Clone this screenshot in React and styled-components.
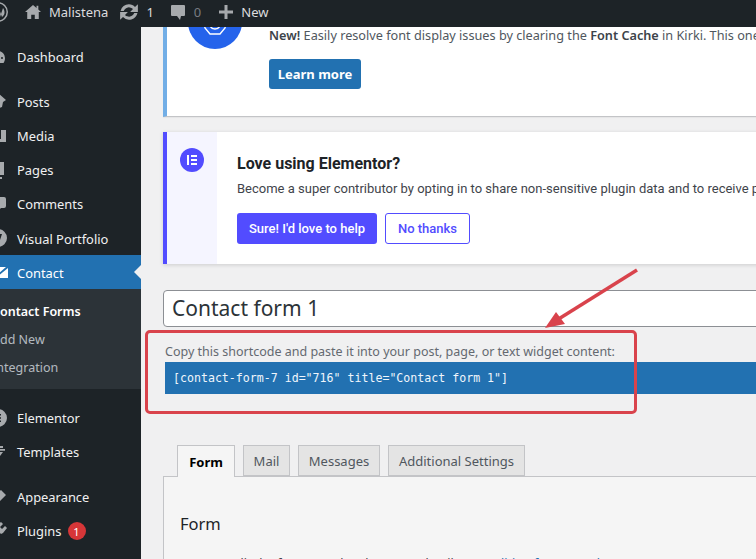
import React from "react";
import styled, { createGlobalStyle } from "styled-components";

const Global = createGlobalStyle`
  html, body { margin: 0; padding: 0; background: #f0f0f1; overflow: hidden; }
  * { box-sizing: border-box; }
`;
const UI = `"Noto Sans", "Open Sans", sans-serif`;

const Page = styled.div`
  position: relative; width: 756px; height: 559px; overflow: hidden;
  display: flex; flex-direction: column; font-family: ${UI}; background: #f0f0f1;
`;
const AdminBar = styled.header`
  height: 27px; flex: none; background: #1d2327; color: #c3c4c7; display: flex; align-items: center;
  padding-bottom: 3px; font-size: 13px; white-space: nowrap; position: relative; z-index: 2;
`;
const BarItem = styled.div`
  display: flex; align-items: center; gap: ${p => p.$gap ?? 6}px; margin-left: ${p => p.$ml ?? 0}px;
  color: ${p => p.$color ?? "#dcdcde"};
`;
const BarIcon = styled.svg`
  width: ${p => p.$w ?? 20}px; height: 20px; flex: none; fill: #a7aaad; margin-left: ${p => p.$ml ?? 0}px;
`;
const Body = styled.div`display: flex; flex: 1; min-height: 0;`;
const Sidebar = styled.nav`
  width: 141px; flex: none; background: #1d2327; padding-top: 13px; overflow: hidden;
`;
const MenuRow = styled.div`
  height: 34px; display: flex; align-items: center; gap: 9px; position: relative;
  font-size: 12.9px; white-space: nowrap;
  margin-top: ${p => p.$mt ?? 0}px;
  color: ${p => p.$active ? "#fff" : "#f0f0f1"};
  background: ${p => p.$active ? "#2271b1" : "transparent"};
  &::after {
    content: ${p => p.$active ? '""' : "none"}; position: absolute; right: 0; top: 10px;
    border: 7px solid transparent; border-right-color: #f0f0f1; border-left-width: 0;
  }
`;
const MenuLabel = styled.span`
  position: relative; top: ${p => p.$nudge ?? 0}px;
`;
const MenuIcon = styled.svg`
  width: 20px; height: 20px; flex: none; margin-left: -12px; fill: ${p => p.$active ? "#fff" : "#a7aaad"};
`;
const Badge = styled.span`
  width: 18px; height: 18px; border-radius: 50%; background: #d63638; color: #fff; font-size: 11px;
  display: flex; align-items: center; justify-content: center; margin-left: -3px;
`;
const Submenu = styled.div`
  background: #2c3338; height: 100px; padding-top: 8px; margin-bottom: 12px;
`;
const SubRow = styled.div`
  height: 28px; display: flex; align-items: center; margin-left: -8px; font-size: 12.5px; white-space: nowrap;
  color: ${p => p.$on ? "#fff" : "rgba(240,246,252,.7)"};
  font-weight: ${p => p.$on ? 600 : 400};
`;
const Main = styled.main`
  flex: 1; min-width: 0; overflow: hidden; padding-left: 22px; position: relative;
`;
const Inner = styled.div`width: 900px;`;
const KirkiNotice = styled.section`
  height: 90px; background: #fff; border-left: 4px solid #72aee6; border-bottom: 1px solid #c3c4c7;
  display: flex; box-shadow: 0 1px 1px rgba(0,0,0,.04);
`;
const KirkiCircle = styled.div`
  width: 54px; height: 54px; border-radius: 50%; background: #2563eb; flex: none; margin: -32px 27px 0 21px;
  display: flex; align-items: flex-end; justify-content: center; padding-bottom: 13px;
`;
const KirkiBody = styled.div`padding-top: 1px; display: flex; flex-direction: column; align-items: flex-start;`;
const KirkiText = styled.p`
  margin: 0; font-size: 12.7px; line-height: 15px; color: #50575e; white-space: nowrap;
  b { font-weight: 600; color: #3c434a; }
`;
const LearnBtn = styled.button`
  margin-top: 16px; width: 92px; height: 30px; background: #2271b1; color: #fff; border: 0; border-radius: 3px;
  font: 700 13px ${UI}; padding: 0;
`;
const ElementorNotice = styled.section`
  margin-top: 15px; height: 132px; background: #fff; display: flex; border-left: 4px solid #524cff;
  box-shadow: 0 1px 4px rgba(0,0,0,.15); font-family: Roboto, sans-serif;
`;
const ElementorSide = styled.div`
  width: 50px; flex: none; background: #f5f5ff; padding: 16px 0 0 13px;
`;
const ElementorLogo = styled.div`
  width: 24px; height: 24px; border-radius: 50%; background: #524cff;
  display: flex; align-items: center; justify-content: center;
`;
const ElementorBody = styled.div`padding: 22px 0 0 20px;`;
const ElementorTitle = styled.h3`
  margin: 0; font: 700 16px/20px Roboto, sans-serif; color: #1d2327;
`;
const ElementorText = styled.p`
  margin: 5px 0 0; font: 400 13px/20px Roboto, sans-serif; color: #3f444b; white-space: nowrap;
`;
const ElementorActions = styled.div`display: flex; gap: 8px; margin-top: 14px; align-items: flex-start;`;
const SolidBtn = styled.button`
  width: 140px; height: 31px; border: 0; border-radius: 3px; background: #524cff; color: #fff;
  font: 500 13px Roboto, sans-serif; padding: 0;
`;
const GhostBtn = styled.button`
  width: 85px; height: 31px; border: 1px solid #524cff; border-radius: 3px; background: #fff; color: #524cff;
  font: 500 13px Roboto, sans-serif; padding: 0;
`;
const TitleInput = styled.div`
  margin-top: 26px; height: 37px; background: #fff; border: 1px solid #8c8f94; border-radius: 4px;
  font-size: 21px; line-height: 35px; color: #2c3338; padding-left: 8px;
`;
const Hint = styled.p`
  margin: 17px 0 0 2px; font-size: 12.5px; line-height: 16px; color: #646970; white-space: nowrap;
`;
const Shortcode = styled.div`
  margin: 2px 0 0 2px; height: 32px; background: #2271b1; color: #f0f6fc; padding-left: 8px;
  font: 400 11.6px/32px "DejaVu Sans Mono", monospace; white-space: nowrap;
`;
const Tabs = styled.div`
  display: flex; margin-top: 51px; padding-left: 14px; gap: 8px; position: relative; z-index: 1;
`;
const Tab = styled.div`
  height: ${p => p.$on ? 32 : 31}px; width: ${p => p.$w}px; display: flex; align-items: center; justify-content: center;
  border: 1px solid #c3c4c7; border-bottom: ${p => p.$on ? 0 : "1px solid #c3c4c7"};
  background: ${p => p.$on ? "#f5f5f5" : "#e4e4e4"};
  color: ${p => p.$on ? "#000" : "#50575e"}; font-size: 13px; font-weight: ${p => p.$on ? 700 : 400};
  white-space: nowrap;
`;
const Panel = styled.section`
  margin-top: -1px; background: #f5f5f5; border: 1px solid #c3c4c7; height: 200px; padding: 34px 16px;
`;
const PanelTitle = styled.h2`
  margin: 0; font-weight: 400; font-size: 16.5px; line-height: 26px; color: #1d2327;
`;
const PanelText = styled.p`
  margin: 18px 0 0; font-size: 12.5px; color: #3c434a; white-space: nowrap;
  a { color: #2271b1; }
`;
const Callout = styled.div`
  position: absolute; left: 145px; top: 330px; width: 492px; height: 84px;
  border: 3px solid #d9434c; border-radius: 5px; pointer-events: none;
`;
const Arrow = styled.svg`
  position: absolute; left: 535px; top: 262px; width: 110px; height: 72px; pointer-events: none;
`;

const paths = {
  dash: "M3 11a7 7 0 0 1 14 0c0 2-.6 3.6-1.5 5h-11C3.600 14.600 3 13 3 11zm7-3.500a1 1 0 1 0 0 2 1 1 0 0 0 0-2zm4 2.500a1 1 0 1 0 0 2 1 1 0 0 0 0-2z",
  posts: "M11 2l7 6-3 2-1 5-8 3-3-1 5-6-3-2 3-4z",
  media: "M2 4h10v3h-3v3H2zM13 4h5v12h-8v-3h3z M2 11h7v5H2z",
  pages: "M6 2h10v13H6zM3 5h2v12h9v2H3z",
  comment: "M4 3h12a2 2 0 0 1 2 2v7a2 2 0 0 1-2 2h-3l-4 4v-4H4a2 2 0 0 1-2-2V5a2 2 0 0 1 2-2z",
  vp: "M10 1a9 9 0 1 1 0 18 9 9 0 0 1 0-18zM6 6l5 9 3-9z",
  el: "M10 1a9 9 0 1 1 0 18 9 9 0 0 1 0-18zM5 6v1.600h8V6zM5 9.200v1.600h8V9.200zM5 12.400V14h8v-1.600z",
  tpl: "M3 7h14v1.800H3zM5 10h10l-3 4H5z M5 4h10v2H5z",
  app: "M13 3l5 5-8 8-2-1 1-3-2 1-3-3z",
  plug: "M13 1l2 2-3 3 2 2 3-3 2 2-4 5-2 1-2-2-4 4-2-2 4-4-2-2 1-2z",
};

const Icon = ({ d, active }) => (
  <MenuIcon viewBox="0 0 20 20" $active={active}><path d={d} fillRule="evenodd" /></MenuIcon>
);

const Row = ({ icon, children, nudge, ...rest }) => (
  <MenuRow {...rest}>
    {icon}
    <MenuLabel $nudge={nudge}>{children}</MenuLabel>
  </MenuRow>
);

export default function App() {
  return (
    <Page>
      <Global />
      <AdminBar>
        <BarIcon viewBox="0 0 20 20" $ml={-12}>
          <path fillRule="evenodd" d="M10 0a10 10 0 1 1 0 20 10 10 0 0 1 0-20zm0 1.500a8.500 8.500 0 1 0 0 17 8.500 8.500 0 0 0 0-17zM5 6l3 9 2-6 2 6 3-9c2 3 2 6 0 8l-1 1-4-11H8z" />
        </BarIcon>
        <BarItem $ml={17} $gap={8}>
          <BarIcon viewBox="1 1 18 18" $w={16}><path d="M10 2l4 3.500V3h2v4.300l3 2.700h-2.500v8H12v-5H8v5H3.500v-8H1z" /></BarIcon>
          <span>Malistena</span>
        </BarItem>
        <BarItem $ml={11} $gap={7}>
          <BarIcon viewBox="1 1 18 18">
            <path d="M10 3c2.200 0 4 .9 5.400 2.400L18 3v7h-7l2.600-2.600A5 5 0 0 0 5.300 9H2.400A7.600 7.600 0 0 1 10 3zM2 10h7l-2.600 2.600A5 5 0 0 0 14.700 11h2.900A7.600 7.600 0 0 1 4.600 14.600L2 17z" />
          </BarIcon>
          <span>1</span>
        </BarItem>
        <BarItem $ml={14} $gap={6} $color="#787c82">
          <BarIcon viewBox="0 0 20 20"><path d="M4 3h12a1 1 0 0 1 1 1v9a1 1 0 0 1-1 1h-3l-1 4-3-4H4a1 1 0 0 1-1-1V4a1 1 0 0 1 1-1z" /></BarIcon>
          <span>0</span>
        </BarItem>
        <BarItem $ml={15} $gap={5}>
          <BarIcon viewBox="0 0 20 20"><path d="M8.500 3h3v5.500H17v3h-5.500V17h-3v-5.500H3v-3h5.500z" /></BarIcon>
          <span>New</span>
        </BarItem>
      </AdminBar>
      <Body>
        <Sidebar>
          <Row icon={<Icon d={paths.dash} />}>Dashboard</Row>
          <Row $mt={11} icon={<Icon d={paths.posts} />}>Posts</Row>
          <Row icon={<Icon d={paths.media} />}>Media</Row>
          <Row icon={<Icon d={paths.pages} />}>Pages</Row>
          <Row icon={<Icon d={paths.comment} />}>Comments</Row>
          <Row nudge={1} icon={<Icon d={paths.vp} />}>Visual Portfolio</Row>
          <Row nudge={1} $active icon={
            <MenuIcon viewBox="0 0 20 20" $active>
              <path d="M1 5h17L9 13 1 7zM20 6v10H1V9l8 6z" fillRule="evenodd" />
            </MenuIcon>
          }>Contact</Row>
          <Submenu>
            <SubRow $on>Contact Forms</SubRow>
            <SubRow>Add New</SubRow>
            <SubRow>Integration</SubRow>
          </Submenu>
          <Row icon={<Icon d={paths.el} />}>Elementor</Row>
          <Row icon={<Icon d={paths.tpl} />}>Templates</Row>
          <Row $mt={11} icon={<Icon d={paths.app} />}>Appearance</Row>
          <MenuRow>
            <Icon d={paths.plug} />
            <span>Plugins</span>
            <Badge>1</Badge>
          </MenuRow>
        </Sidebar>
        <Main>
          <Inner>
            <KirkiNotice>
              <KirkiCircle>
                <svg width="30" height="16" viewBox="0 0 30 16" fill="none" stroke="#fff" strokeWidth="1.400">
                  <path d="M3 0l2 8 5 6h10l5-6 2-8" />
                  <path d="M9 0c0 5 2 9 6 9s6-4 6-9" />
                  <path d="M13 0v5M17 0v5" />
                </svg>
              </KirkiCircle>
              <KirkiBody>
                <KirkiText><b>New!</b> Easily resolve font display issues by clearing the <b>Font Cache</b> in Kirki. This one-time action ensures your fonts load properly.</KirkiText>
                <LearnBtn>Learn more</LearnBtn>
              </KirkiBody>
            </KirkiNotice>
            <ElementorNotice>
              <ElementorSide>
                <ElementorLogo>
                  <svg width="12" height="12" viewBox="0 0 12 12" fill="#fff">
                    <path d="M1 1h2v10H1zM5 1h6v2H5zM5 5h6v2H5zM5 9h6v2H5z" />
                  </svg>
                </ElementorLogo>
              </ElementorSide>
              <ElementorBody>
                <ElementorTitle>Love using Elementor?</ElementorTitle>
                <ElementorText>Become a super contributor by opting in to share non-sensitive plugin data and to receive periodic email updates from us.</ElementorText>
                <ElementorActions>
                  <SolidBtn>Sure! I'd love to help</SolidBtn>
                  <GhostBtn>No thanks</GhostBtn>
                </ElementorActions>
              </ElementorBody>
            </ElementorNotice>
            <TitleInput>Contact form 1</TitleInput>
            <Hint>Copy this shortcode and paste it into your post, page, or text widget content:</Hint>
            <Shortcode>[contact-form-7 id="716" title="Contact form 1"]</Shortcode>
            <Tabs>
              <Tab $on $w={58}>Form</Tab>
              <Tab $w={47}>Mail</Tab>
              <Tab $w={82}>Messages</Tab>
              <Tab $w={137}>Additional Settings</Tab>
            </Tabs>
            <Panel>
              <PanelTitle>Form</PanelTitle>
              <PanelText>You can edit the form template here. For details, see <a>Editing form template</a>.</PanelText>
            </Panel>
          </Inner>
        </Main>
      </Body>
      <Callout />
      <Arrow viewBox="0 0 110 72">
        <path d="M102 8L22 58" stroke="#d9434c" strokeWidth="3.500" fill="none" />
        <path d="M10 66L21 50 30 62z" fill="#d9434c" />
      </Arrow>
    </Page>
  );
}
